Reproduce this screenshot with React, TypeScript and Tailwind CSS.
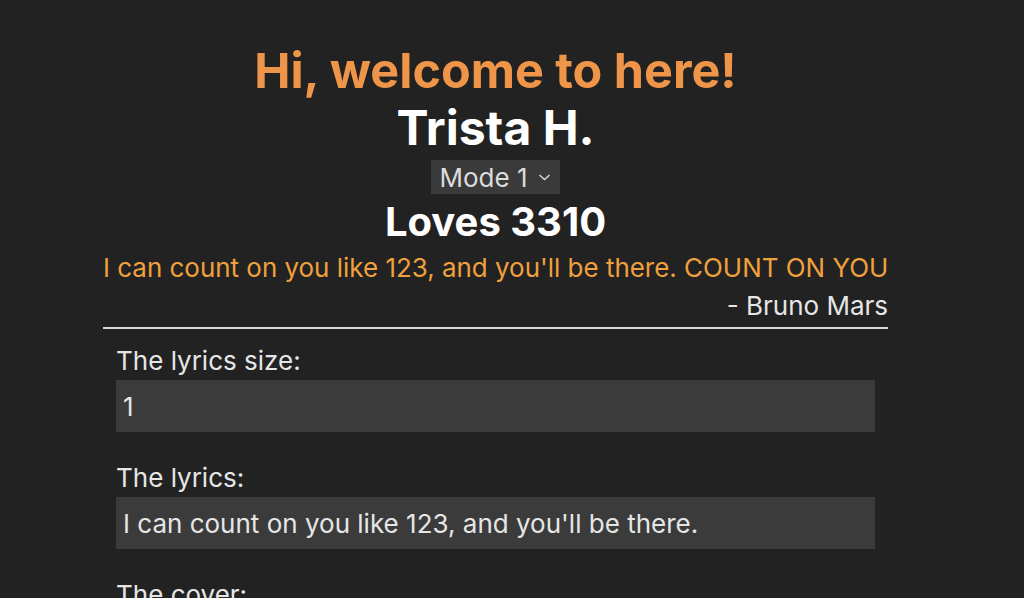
import React from "react";

const App = () => {
  return (
    <div className="min-h-[598px] bg-[#222222] font-['Inter',sans-serif] text-[#e6e6e6]">
      <div className="ml-[103px] w-[785px] pt-[43px]">
        {/* Header */}
        <div className="flex flex-col items-center text-center">
          <h1 className="text-[48.5px] font-bold leading-[56px] text-[#ef9549]">Hi, welcome to here!</h1>
          <h2 className="text-[48px] font-bold leading-[58px] text-white">Trista H.</h2>
          <div className="mt-[3px] flex h-[34px] items-center gap-[10px] bg-[#3a3a3a] pl-[8px] pr-[9px] text-[26px] text-[#dcdcdc]">
            <span>Mode 1</span>
            <svg width="13" height="12" viewBox="0 0 13 12" fill="none" stroke="#dcdcdc" strokeWidth="1.4">
              <path d="M1.5 4 L6.5 8.5 L11.5 4" />
            </svg>
          </div>
          <h3 className="mt-[4px] text-[40px] font-bold leading-[48px] text-white">Loves 3310</h3>
        </div>

        {/* Quote */}
        <p className="whitespace-nowrap text-center text-[25.95px] leading-[44px] text-[#f0a03c]">
          I can count on you like 123, and you'll be there. COUNT ON YOU
        </p>
        <p className="text-right text-[26px] leading-[32px] text-[#e6e6e6]">- Bruno Mars</p>
        <div className="mt-[5px] h-[2px] bg-[#d6d6d6]" />

        {/* Form */}
        <div className="flex flex-col gap-[30px] px-[13px] pt-[16px]">
          <label className="flex flex-col gap-[3px]">
            <span className="text-[26px] leading-[32px]">The lyrics size:</span>
            <input
              defaultValue="1"
              className="h-[52px] bg-[#3b3b3b] px-[7px] text-[26px] text-[#e6e6e6] outline-none"
            />
          </label>
          <label className="flex flex-col gap-[3px]">
            <span className="text-[26px] leading-[32px]">The lyrics:</span>
            <input
              defaultValue="I can count on you like 123, and you'll be there."
              className="h-[52px] bg-[#3b3b3b] px-[7px] text-[26px] text-[#e6e6e6] outline-none"
            />
          </label>
          <label className="flex flex-col gap-[3px]">
            <span className="text-[26px] leading-[32px]">The cover:</span>
            <input className="h-[52px] bg-[#3b3b3b] px-[7px] text-[26px] text-[#e6e6e6] outline-none" />
          </label>
        </div>
      </div>
    </div>
  );
};

export default App;
